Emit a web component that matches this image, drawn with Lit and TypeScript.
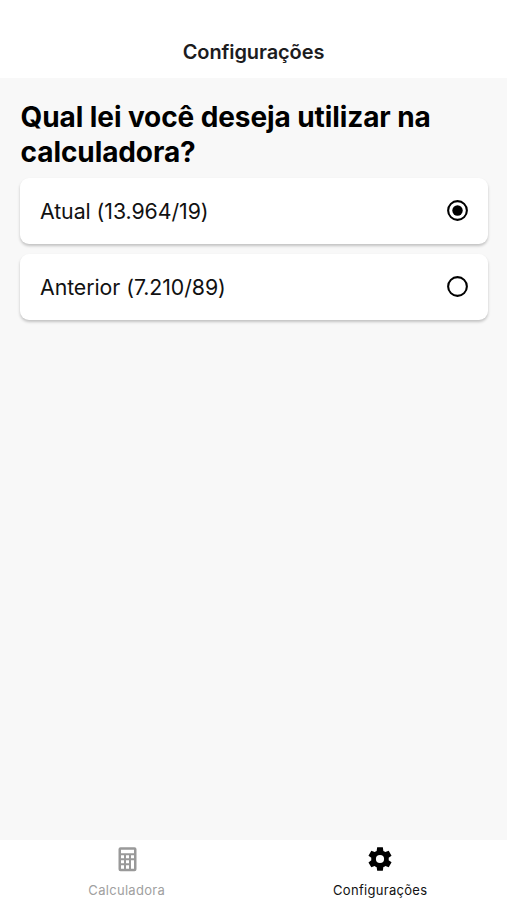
import { LitElement, html, css } from "lit";
import { customElement, state } from "lit/decorators.js";

const LAWS = ["Atual (13.964/19)", "Anterior (7.210/89)"];

@customElement("app-root")
export class AppRoot extends LitElement {
  @state() private selected = 0;

  static styles = css`
    :host { display: flex; flex-direction: column; height: 100vh; background: #f8f8f8; font-family: Inter, "Liberation Sans", sans-serif; color: #000; }
    .header { box-sizing: border-box; height: 78px; padding-top: 40px; background: #fff; text-align: center; font-size: 20px; line-height: 24px; font-weight: 600; letter-spacing: -0.1px; color: #1c1c1e; }
    .content { flex: 1; padding: 22px 19px 0 20px; }
    .title { margin: 0 0 8px; padding-left: 0.6px; font-size: 28px; line-height: 35px; font-weight: 700; letter-spacing: -0.09px; white-space: nowrap; }
    .option { box-sizing: border-box; display: flex; align-items: center; justify-content: space-between; height: 66px; margin-bottom: 10px; padding: 0 18px 0 20px; border-radius: 9px; background: #fff; box-shadow: 0 2px 3px rgba(0, 0, 0, 0.22); font-size: 21.3px; letter-spacing: -0.06px; color: #111; cursor: pointer; }
    .radio { width: 25px; height: 25px; margin-bottom: 2px; color: #000; }
    .tabs { display: flex; height: 60px; background: #fff; }
    .tab { flex: 1; display: flex; flex-direction: column; align-items: center; padding-top: 5px; gap: 9px; font-size: 13px; line-height: 16px; letter-spacing: 0.3px; color: #a0a0a0; }
    .tab.active { color: #111; }
    .icon { width: 28px; height: 28px; color: #999; }
    .active .icon { color: #000; }
  `;

  render() {
    return html`
      <header class="header">Configurações</header>
      <main class="content">
        <h1 class="title">Qual lei você deseja utilizar na<br />calculadora?</h1>
        ${LAWS.map((law, i) => html`
          <div class="option" @click=${() => (this.selected = i)}>
            <span>${law}</span>
            <svg class="radio" viewBox="0 0 24 24" fill="currentColor">
              <path d="M12 2a10 10 0 1 0 0 20 10 10 0 0 0 0-20zm0 18a8 8 0 1 1 0-16 8 8 0 0 1 0 16z" />
              ${this.selected === i ? html`<svg viewBox="0 0 24 24"><circle cx="12" cy="12" r="5" /></svg>` : ""}
            </svg>
          </div>`)}
      </main>
      <nav class="tabs">
        <div class="tab">
          <svg class="icon" viewBox="0 0 28 28" fill="currentColor" fill-rule="evenodd"><path d="M7.5 2.2h14a2 2 0 0 1 2 2v20a2 2 0 0 1-2 2h-14a2 2 0 0 1-2-2v-20a2 2 0 0 1 2-2zM8 4.700v3.500h13v-3.500zM8 10.200v3h3v-3zM13 10.200v3h3v-3zM18 10.200v3h3v-3zM8 15.200v3h3v-3zM13 15.200v3h3v-3zM18 15.200v8.500h3v-8.500zM8 20.200v3.500h3v-3.500zM13 20.200v3.500h3v-3.500z" /></svg>
          <span>Calculadora</span>
        </div>
        <div class="tab active">
          <svg class="icon" viewBox="0 0 24 24" fill="currentColor"><path d="M19.43 13.01c.04-.33.08-.67.08-1.010s-.03-.66-.07-.99l2.450-1.900-2.430-4.220-2.870 1.160c-.52-.4-1.090-.74-1.710-1L14.440 2H9.570l-.44 3.070c-.62.26-1.190.6-1.710 1L4.550 4.890 2.110 9.110l2.440 1.920c-.04.33-.07.65-.07.99s.03.68.08 1.010l-2.440 1.890 2.430 4.200 2.880-1.150c.53.41 1.100.75 1.730 1.010L9.580 22h4.850l.44-3.070c.62-.26 1.200-.6 1.730-1.010l2.880 1.150 2.430-4.200zM12 15.500a3.500 3.500 0 1 1 0-7 3.500 3.500 0 0 1 0 7z" /></svg>
          <span>Configurações</span>
        </div>
      </nav>
    `;
  }
}
